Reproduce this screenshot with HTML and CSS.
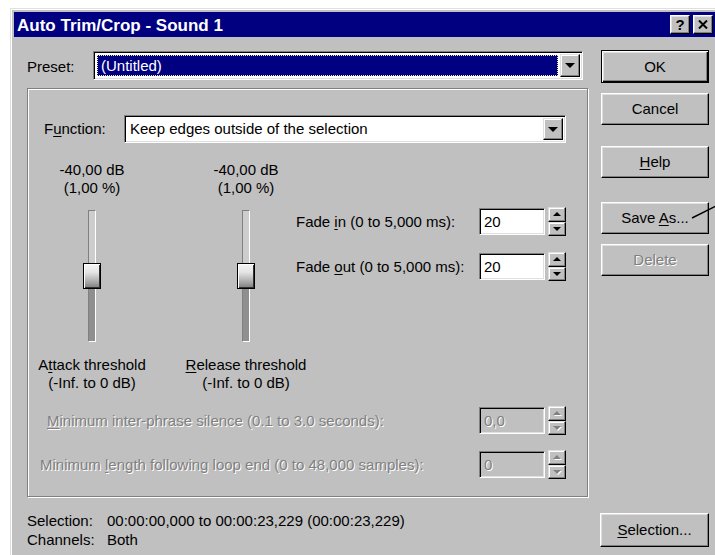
FILE: index.html
```html
<!DOCTYPE html>
<html>
<head>
<meta charset="utf-8">
<title>Auto Trim/Crop - Sound 1</title>
<link rel="stylesheet" href="styles.css">
</head>
<body>
<div class="window">
  <div class="titlebar">
    <span class="title">Auto Trim/Crop - Sound 1</span>
    <div class="caption-buttons">
      <span class="cap-btn help-glyph">?</span>
      <span class="cap-btn">
        <svg width="10" height="9" viewBox="0 0 10 9"><path d="M1 0.5 L9 8.5 M9 0.5 L1 8.5" stroke="#000" stroke-width="2" fill="none"/></svg>
      </span>
    </div>
  </div>

  <div class="client">
    <div class="main">
      <div class="preset-row">
        <span class="preset-lbl">Preset:</span>
        <div class="combo preset-combo">
          <div class="combo-field selected"><span class="focus-text">(Untitled)</span></div>
          <div class="combo-btn"><i class="tri-down"></i></div>
        </div>
      </div>

      <div class="group">
        <div class="function-row">
          <span class="function-lbl">F<u>u</u>nction:</span>
          <div class="combo function-combo">
            <div class="combo-field">Keep edges outside of the selection</div>
            <div class="combo-btn"><i class="tri-down"></i></div>
          </div>
        </div>

        <div class="level-area">
          <div class="slider-col attack">
            <div class="db">-40,00 dB<br>(1,00 %)</div>
            <div class="slider">
              <div class="track"></div>
              <div class="thumb"></div>
            </div>
            <div class="thr">A<u>t</u>tack threshold<br>(-Inf. to 0 dB)</div>
          </div>
          <div class="slider-col release">
            <div class="db">-40,00 dB<br>(1,00 %)</div>
            <div class="slider">
              <div class="track"></div>
              <div class="thumb"></div>
            </div>
            <div class="thr"><u>R</u>elease threshold<br>(-Inf. to 0 dB)</div>
          </div>
          <div class="fade-panel">
            <div class="field-row">
              <span>Fade <u>i</u>n (0 to 5,000 ms):</span>
              <div class="edit">20</div>
              <div class="spinner">
                <div class="spin-half"><i class="tri-up"></i></div>
                <div class="spin-half"><i class="tri-dn"></i></div>
              </div>
            </div>
            <div class="field-row fade-out">
              <span>Fade <u>o</u>ut (0 to 5,000 ms):</span>
              <div class="edit">20</div>
              <div class="spinner">
                <div class="spin-half"><i class="tri-up"></i></div>
                <div class="spin-half"><i class="tri-dn"></i></div>
              </div>
            </div>
          </div>
        </div>

        <div class="field-row disabled-row silence-row">
          <span class="disabled indent-a"><u>M</u>inimum inter-phrase silence (0.1 to 3.0 seconds):</span>
          <div class="edit off"><span class="disabled">0,0</span></div>
          <div class="spinner off">
            <div class="spin-half"><i class="tri-up"></i></div>
            <div class="spin-half"><i class="tri-dn"></i></div>
          </div>
        </div>
        <div class="field-row disabled-row length-row">
          <span class="disabled indent-b">Minimum <u>l</u>ength following loop end (0 to 48,000 samples):</span>
          <div class="edit off"><span class="disabled">0</span></div>
          <div class="spinner off">
            <div class="spin-half"><i class="tri-up"></i></div>
            <div class="spin-half"><i class="tri-dn"></i></div>
          </div>
        </div>
      </div>
    </div>

    <div class="side">
      <button class="btn default"><span>OK</span></button>
      <button class="btn cancel"><span>Cancel</span></button>
      <button class="btn help"><span><u>H</u>elp</span></button>
      <button class="btn save"><span>Save <u>A</u>s...</span></button>
      <button class="btn delete"><span class="disabled">Delete</span></button>
    </div>

    <div class="info">
      <span>Selection:</span><span>00:00:00,000 to 00:00:23,229 (00:00:23,229)</span>
      <span>Channels:</span><span>Both</span>
    </div>
    <div class="side-bottom">
      <button class="btn selection"><span><u>S</u>election...</span></button>
    </div>
  </div>
</div>

<svg class="pointer-line" width="26" height="16" viewBox="0 0 26 16"><line x1="2" y1="14" x2="26" y2="2" stroke="#000" stroke-width="1.4"/></svg>
</body>
</html>
```

FILE: styles.css
```css
* { box-sizing: border-box; }

html, body {
  margin: 0;
  padding: 0;
}

body {
  position: relative;
  width: 715px;
  height: 555px;
  overflow: hidden;
  background: #fff;
  font-family: "Liberation Sans", Arial, sans-serif;
  font-size: 15px;
  line-height: 18px;
  color: #000;
}

u { text-decoration-thickness: 1px; text-underline-offset: 2px; }

/* dialog frame */
.window {
  margin: 8px 0 0 10px;
  width: 709px;
  height: 560px;
  background: #c0c0c0;
  border-top: 1px solid #dfdfdf;
  border-left: 1px solid #dfdfdf;
  box-shadow: inset 1px 1px #fff;
  padding: 3px 4px 0 3px;
}

.titlebar {
  height: 25px;
  background: #000080;
  color: #fff;
  display: flex;
  align-items: center;
  justify-content: space-between;
  padding: 0 2px 0 3px;
}

.title {
  font-weight: bold;
  font-size: 17px;
  padding-top: 2px;
}

.caption-buttons {
  display: flex;
  gap: 3px;
}

.cap-btn {
  width: 20px;
  height: 19px;
  display: flex;
  align-items: center;
  justify-content: center;
  background: #c0c0c0;
  border: 1px solid;
  border-color: #fff #000 #000 #fff;
  box-shadow: inset -1px -1px #808080, inset 1px 1px #dfdfdf;
  color: #000;
}

.help-glyph {
  font-weight: bold;
  font-size: 15px;
  padding-top: 1px;
}

/* client area */
.client {
  display: grid;
  grid-template-columns: 561px 108px;
  column-gap: 13px;
  row-gap: 14px;
  padding: 13px 6px 0 13px;
}

.preset-row {
  display: flex;
  align-items: flex-start;
  height: 32px;
}

.preset-lbl {
  width: 66px;
  padding-top: 8px;
}

/* sunken combo boxes */
.combo {
  display: flex;
  background: #fff;
  border: 1px solid;
  border-color: #808080 #fff #fff #808080;
  box-shadow: inset 1px 1px #000, inset -1px -1px #dfdfdf;
  padding: 2px;
}

.preset-combo {
  width: 490px;
  height: 29px;
  margin-top: 1px;
}

.combo-field {
  flex: 1;
  display: flex;
  align-items: center;
  padding-left: 3px;
}

.combo-field.selected {
  margin: 1px 2px 1px 1px;
  background: #000080;
  color: #fff;
  padding-left: 0;
  border: 1px dotted #f0f0b0;
}

.focus-text { padding-left: 3px; }

.combo-btn {
  width: 20px;
  display: flex;
  align-items: center;
  justify-content: center;
  background: #c0c0c0;
  border: 1px solid;
  border-color: #dfdfdf #000 #000 #dfdfdf;
  box-shadow: inset -1px -1px #808080, inset 1px 1px #fff;
}

.tri-down {
  width: 0;
  height: 0;
  border-left: 5px solid transparent;
  border-right: 5px solid transparent;
  border-top: 5px solid #000;
}

/* etched group frame */
.group {
  margin-top: 6px;
  border: 1px solid #808080;
  box-shadow: inset 1px 1px #fff, 1px 1px #fff;
  padding: 26px 21px 17px 8px;
}

.function-row {
  display: flex;
  align-items: center;
  height: 28px;
  margin-left: 8px;
}

.function-lbl { width: 80px; }

.function-combo {
  flex: 1;
  height: 28px;
}

/* threshold sliders and fades */
.level-area {
  display: flex;
  margin-top: 18px;
}

.slider-col {
  display: flex;
  flex-direction: column;
  align-items: center;
}

.slider-col.attack { width: 112px; margin-right: 48px; }
.slider-col.release { width: 100px; }

.db, .thr {
  text-align: center;
  white-space: nowrap;
}

.slider {
  position: relative;
  width: 18px;
  height: 132px;
  margin-top: 13px;
}

.track {
  width: 8px;
  height: 100%;
  margin: 0 auto;
  border: 1px solid;
  border-color: #808080 #fff #fff #808080;
  background: linear-gradient(to bottom, #cdcdcd 0, #cdcdcd 50%, #8f8f8f 50%, #8f8f8f 100%);
}

.thumb {
  position: absolute;
  left: 0;
  top: 53px;
  width: 18px;
  height: 26px;
  border: 1px solid #000;
  box-shadow: inset 1px 1px #fff, inset -1px -1px #303030;
  background: linear-gradient(to bottom, #f6f6f6 0%, #e4e4e4 35%, #a8a8a8 75%, #7c7c7c 100%);
}

.thr { margin-top: 14px; }

.fade-panel {
  flex: 1;
  padding-top: 46px;
}

.field-row {
  display: grid;
  grid-template-columns: 1fr 66px 18px;
  column-gap: 3px;
  align-items: center;
  height: 29px;
}

.field-row.fade-out { margin-top: 16px; }

.edit {
  height: 27px;
  display: flex;
  align-items: center;
  padding-left: 4px;
  background: #fff;
  border: 1px solid;
  border-color: #808080 #fff #fff #808080;
  box-shadow: inset 1px 1px #000, inset -1px -1px #dfdfdf;
}

.edit.off { background: #c0c0c0; }

.spinner {
  height: 29px;
  display: flex;
  flex-direction: column;
}

.spin-half {
  flex: 1;
  display: flex;
  align-items: center;
  justify-content: center;
  background: #c0c0c0;
  border: 1px solid;
  border-color: #dfdfdf #000 #000 #dfdfdf;
  box-shadow: inset -1px -1px #808080, inset 1px 1px #fff;
}

.tri-up, .tri-dn {
  width: 0;
  height: 0;
  border-left: 4px solid transparent;
  border-right: 4px solid transparent;
}

.tri-up { border-bottom: 4px solid #000; }
.tri-dn { border-top: 4px solid #000; }

.spinner.off .tri-up { border-bottom-color: #808080; filter: drop-shadow(1px 1px 0 #fff); }
.spinner.off .tri-dn { border-top-color: #808080; filter: drop-shadow(1px 1px 0 #fff); }

.silence-row { margin-top: 14px; }
.length-row { margin-top: 15px; }

.indent-a { margin-left: 11px; }
.indent-b { margin-left: 4px; }

.disabled {
  color: #808080;
  text-shadow: 1px 1px 0 #fff;
}

/* command buttons */
.side {
  display: flex;
  flex-direction: column;
}

.btn {
  width: 108px;
  height: 32px;
  display: flex;
  align-items: center;
  justify-content: center;
  padding: 0;
  font: inherit;
  color: #000;
  background: #c0c0c0;
  border: 1px solid;
  border-color: #fff #000 #000 #fff;
  box-shadow: inset -1px -1px #808080, inset 1px 1px #dfdfdf;
}

.btn.default {
  height: 33px;
  border-color: #000;
  box-shadow: inset 1px 1px #fff, inset -1px -1px #000, inset -2px -2px #808080, inset 2px 2px #dfdfdf;
}

.btn.cancel { margin-top: 10px; }
.btn.help { margin-top: 21px; }
.btn.save { margin-top: 24px; }
.btn.delete { margin-top: 10px; }

.info {
  display: grid;
  grid-template-columns: 80px auto;
  line-height: 19px;
}

.side-bottom { padding-top: 2px; }

.btn.selection {
  width: 109px;
  height: 34px;
  margin-left: -1px;
}

/* callout stroke running off to the right of Save As */
.pointer-line {
  position: absolute;
  left: 690px;
  top: 204px;
}
```
